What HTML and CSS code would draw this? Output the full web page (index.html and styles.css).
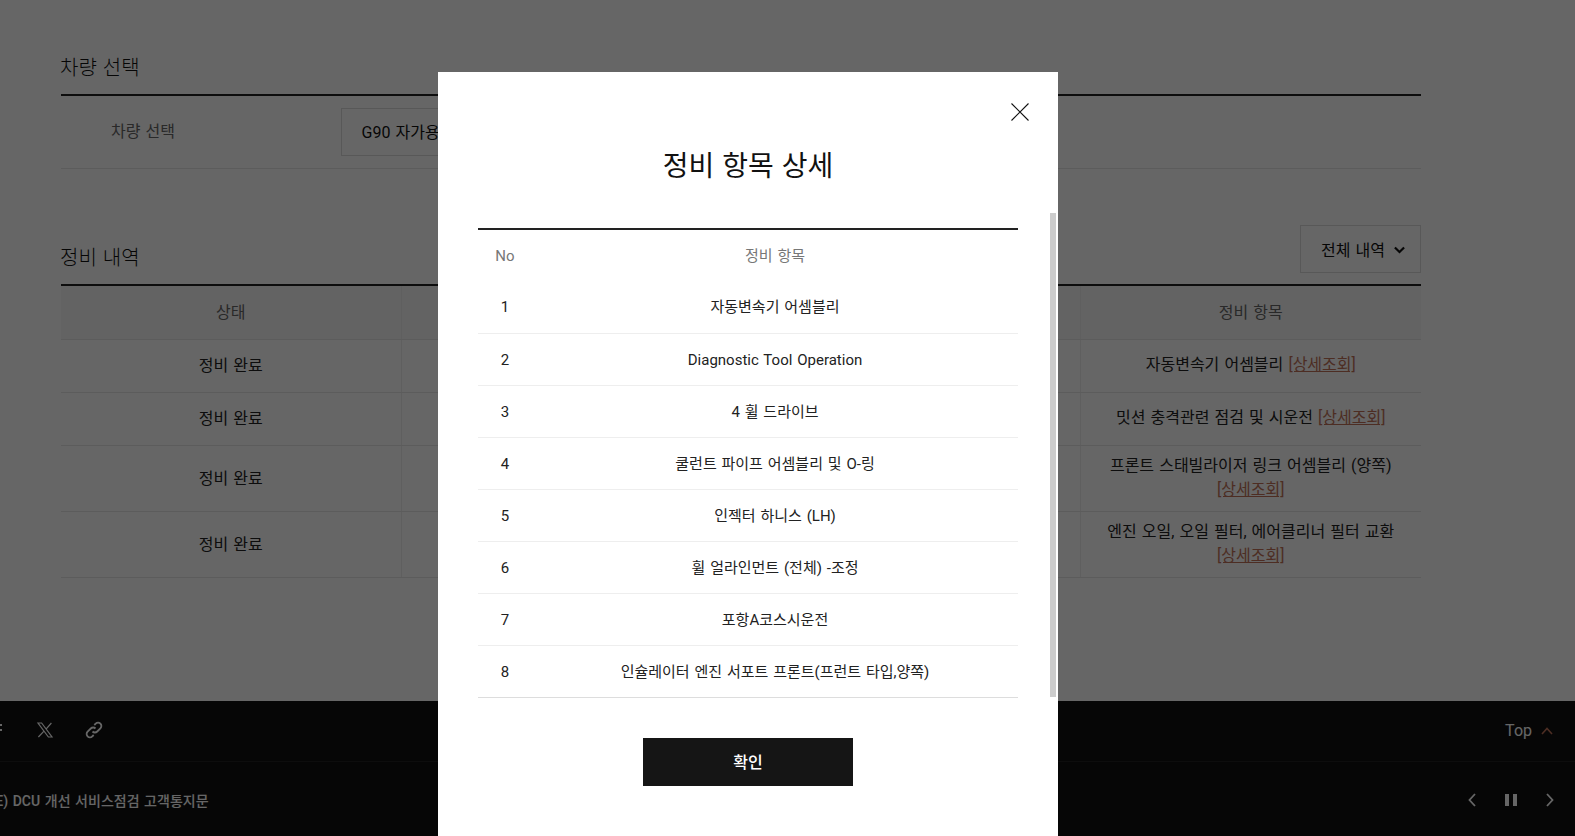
FILE: index.html
```html
<!DOCTYPE html>
<html lang="ko">
<head>
<meta charset="utf-8">
<title>정비 내역</title>
<link rel="stylesheet" href="styles.css">
</head>
<body>
<div class="page">
  <main class="content">
    <section class="vehicle">
      <h2 class="title">차량 선택</h2>
      <div class="vehicle-row">
        <span class="vehicle-label">차량 선택</span>
        <div class="select">G90 자가용</div>
      </div>
    </section>
    <section class="history">
      <div class="history-head">
        <h2 class="title">정비 내역</h2>
        <div class="filter">전체 내역
          <svg class="filter-icon" viewBox="0 0 12 8" width="11" height="8"><path d="M1 1.2 6 6.2l5-5" fill="none" stroke="currentColor" stroke-width="2.4"/></svg>
        </div>
      </div>
      <table class="history-table">
        <thead>
          <tr><th class="col-status">상태</th><th></th><th class="col-item">정비 항목</th></tr>
        </thead>
        <tbody>
          <tr><td>정비 완료</td><td></td><td>자동변속기 어셈블리 <a class="detail">[상세조회]</a></td></tr>
          <tr><td>정비 완료</td><td></td><td>밋션 충격관련 점검 및 시운전 <a class="detail">[상세조회]</a></td></tr>
          <tr><td>정비 완료</td><td></td><td>프론트 스태빌라이저 링크 어셈블리 (양쪽)<br><a class="detail">[상세조회]</a></td></tr>
          <tr><td>정비 완료</td><td></td><td>엔진 오일, 오일 필터, 에어클리너 필터 교환<br><a class="detail">[상세조회]</a></td></tr>
        </tbody>
      </table>
    </section>
  </main>
  <footer class="footer">
    <div class="footer-top">
      <div class="share">
        <svg class="share-icon" viewBox="0 0 20 20" width="20" height="20"><path d="M12 5h4M12 10h4" fill="none" stroke="currentColor" stroke-width="2"/></svg>
        <svg class="share-icon" viewBox="0 0 20 20" width="20" height="20"><path d="M3 3h3.6L17 17h-3.6zM16.4 3 10.8 9.3M9.2 10.9 3.4 17" fill="none" stroke="currentColor" stroke-width="1.2"/></svg>
        <svg class="share-icon" viewBox="0 0 20 20" width="20" height="20"><path d="M8.5 11.5a3.3 3.3 0 0 0 4.7 0l3.2-3.2a3.3 3.3 0 0 0-4.7-4.7l-1.4 1.4M11.5 8.5a3.3 3.3 0 0 0-4.7 0l-3.2 3.2a3.3 3.3 0 0 0 4.7 4.7l1.4-1.4" fill="none" stroke="currentColor" stroke-width="1.8"/></svg>
      </div>
      <div class="top-link">Top
        <svg class="top-icon" viewBox="0 0 12 8" width="12" height="8"><path d="M1 7l5-5.5L11 7" fill="none" stroke="currentColor" stroke-width="1.6"/></svg>
      </div>
    </div>
    <div class="footer-bottom">
      <div class="notice">(SE) DCU 개선 서비스점검 고객통지문</div>
      <div class="notice-controls">
        <svg viewBox="0 0 8 14" width="8" height="14"><path d="M7 1 1.5 7 7 13" fill="none" stroke="currentColor" stroke-width="1.8"/></svg>
        <svg viewBox="0 0 12 12" width="12" height="12"><path d="M0 0h4v12H0zM8 0h4v12H8z" fill="currentColor"/></svg>
        <svg viewBox="0 0 8 14" width="8" height="14"><path d="M1 1l5.5 6L1 13" fill="none" stroke="currentColor" stroke-width="1.8"/></svg>
      </div>
    </div>
  </footer>
</div>
<div class="overlay"></div>
<div class="modal">
  <button class="close" aria-label="닫기">
    <svg viewBox="0 0 18 18" width="18" height="18"><path d="M.5.5l17 17M17.5.5l-17 17" fill="none" stroke="#111" stroke-width="1.1"/></svg>
  </button>
  <h3 class="modal-title">정비 항목 상세</h3>
  <table class="modal-table">
    <thead>
      <tr><th class="col-no">No</th><th>정비 항목</th></tr>
    </thead>
    <tbody>
      <tr><td>1</td><td>자동변속기 어셈블리</td></tr>
      <tr><td>2</td><td>Diagnostic Tool Operation</td></tr>
      <tr><td>3</td><td>4 휠 드라이브</td></tr>
      <tr><td>4</td><td>쿨런트 파이프 어셈블리 및 O-링</td></tr>
      <tr><td>5</td><td>인젝터 하니스 (LH)</td></tr>
      <tr><td>6</td><td>휠 얼라인먼트 (전체) -조정</td></tr>
      <tr><td>7</td><td>포항A코스시운전</td></tr>
      <tr><td>8</td><td>인슐레이터 엔진 서포트 프론트(프런트 타입,양쪽)</td></tr>
    </tbody>
  </table>
  <button class="confirm">확인</button>
  <div class="scroll-thumb"></div>
</div>
</body>
</html>
```

FILE: styles.css
```css
* { box-sizing: border-box; }
html, body { margin: 0; height: 836px; overflow: hidden; background: #fff; }
body { font-family: Roboto, "Noto Sans CJK KR", sans-serif; color: #222; font-size: 16px; word-spacing: .07em; }
.page { width: 1575px; height: 836px; overflow: hidden; display: flex; flex-direction: column; }
.content { height: 701px; padding: 51px 154px 0 61px; }
.title { margin: 0 0 0 -1px; font-size: 20px; line-height: 30px; font-weight: 300; color: #111; }
.vehicle .title { padding: 2px 0 11px; }
.vehicle-row { display: flex; align-items: center; padding: 12px 0; border-top: 2px solid #222; border-bottom: 1px solid #e5e5e5; height: 75px; }
.vehicle-label { width: 280px; padding-left: 50px; color: #666; line-height: 24px; }
.select { width: 400px; height: 48px; border: 1px solid #ddd; padding-left: 19.5px; line-height: 47px; color: #111; }
.history { margin-top: 56px; }
.history-head { display: flex; justify-content: space-between; align-items: flex-end; padding-bottom: 11px; border-bottom: 2px solid #222; }
.filter { width: 121px; height: 48px; border: 1px solid #ddd; padding-left: 20px; display: flex; align-items: center; gap: 9px; color: #111; }
.filter-icon { margin-top: 1px; }
.history-table { width: 100%; border-collapse: collapse; table-layout: fixed; }
.history-table th { height: 53px; background: #f8f8f8; font-weight: 400; color: #666; border-bottom: 1px solid #e5e5e5; border-right: 1px solid #eee; padding: 0 0 2px; }
.history-table th:last-child, .history-table td:last-child { border-right: 0; }
.history-table td { height: 53px; padding: 8px 0 9px; text-align: center; line-height: 24px; border-bottom: 1px solid #e5e5e5; border-right: 1px solid #eee; }
.history-table td:first-child { padding-top: 10px; }
.col-status { width: 340px; }
.col-item { width: 341px; }
.detail { color: #c07258; text-decoration: underline; }
.footer { flex: 1; background: #111; color: #fff; }
.footer-top { height: 61px; display: flex; justify-content: space-between; align-items: center; border-bottom: 1px solid #222; padding-right: 22px; }
.share { display: flex; gap: 29px; margin-left: -14px; margin-top: -2px; color: #fff; }
.top-link { display: flex; align-items: center; gap: 9px; line-height: 24px; color: #fff; }
.top-icon { color: #c07258; margin-top: -1px; }
.footer-bottom { flex: 1; height: 74px; display: flex; justify-content: space-between; align-items: center; padding: 2px 21px 0 0; }
.notice { font-size: 14px; font-weight: 500; margin-left: -18px; color: #fff; }
.notice-controls { display: flex; align-items: center; gap: 29px; color: #fff; }
.overlay { position: fixed; inset: 0; background: rgba(0,0,0,.6); }
.modal { position: fixed; left: 438px; top: 72px; width: 620px; height: 764px; background: #fff; padding: 0 40px; display: flex; flex-direction: column; align-items: center; overflow: hidden; }
.close { position: absolute; top: 31px; right: 29px; width: 18px; height: 18px; padding: 0; border: 0; background: none; display: block; }
.modal-title { margin: 68px 0 0; height: 48px; font-size: 28px; line-height: 54px; font-weight: 400; color: #111; }
.modal-table { width: 540px; margin-top: 40px; border-collapse: collapse; table-layout: fixed; border-top: 2px solid #222; font-size: 15px; line-height: 24px; }
.modal-table th { height: 52px; font-weight: 400; color: #777; padding: 1px 0 0; }
.col-no { width: 54px; }
.modal-table td { height: 52px; text-align: center; padding: 1px 0 0; border-bottom: 1px solid #eee; }
.modal-table tr:last-child td { border-bottom-color: #ddd; }
.confirm { margin-top: 40px; width: 210px; height: 48px; padding: 0 0 2px; background: #151515; color: #fff; border: 0; font: 500 16px Roboto, "Noto Sans CJK KR", sans-serif; }
.scroll-thumb { position: absolute; left: 612px; top: 141px; width: 6px; height: 484px; background: #ccc; }
```
